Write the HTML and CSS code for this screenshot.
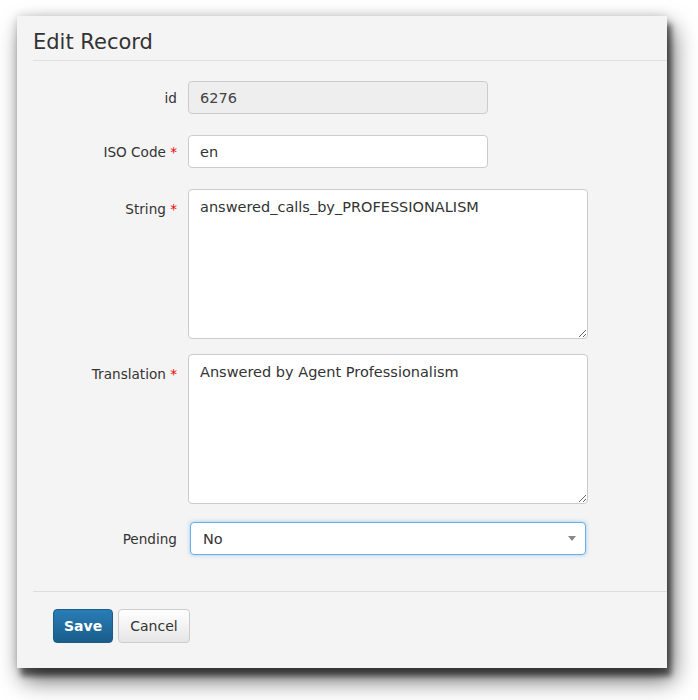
FILE: index.html
```html
<!DOCTYPE html>
<html lang="en">
<head>
  <meta charset="UTF-8">
  <title>Edit Record</title>
  <link rel="stylesheet" href="styles.css">
</head>
<body>

  <div class="dialog">
    <div class="dialog-header">
      <h1>Edit Record</h1>
    </div>

    <form class="record-form">
      <div class="row">
        <label class="label">id</label>
        <input type="text" class="field short" value="6276" disabled>
      </div>

      <div class="row">
        <label class="label">ISO Code <span class="req">*</span></label>
        <input type="text" class="field short" value="en">
      </div>

      <div class="row top">
        <label class="label">String <span class="req">*</span></label>
        <textarea class="field long">answered_calls_by_PROFESSIONALISM</textarea>
      </div>

      <div class="row top">
        <label class="label">Translation <span class="req">*</span></label>
        <textarea class="field long">Answered by Agent Professionalism</textarea>
      </div>

      <div class="row pending">
        <label class="label">Pending</label>
        <div class="select-box">
          <span>No</span>
          <span class="caret"></span>
        </div>
      </div>
    </form>

    <div class="dialog-footer">
      <button type="button" class="btn btn-primary">Save</button>
      <button type="button" class="btn">Cancel</button>
    </div>
  </div>

</body>
</html>
```

FILE: styles.css
```css
html, body {
  margin: 0;
  background: #fff;
}

body {
  width: 698px;
  height: 700px;
  padding: 16px 0 0 17px;
  box-sizing: border-box;
  overflow: hidden;
  font-family: "DejaVu Sans", Verdana, sans-serif;
  color: #333;
}

.dialog {
  width: 650px;
  height: 652px;
  background: #f4f4f4;
  box-shadow: 4px 8px 6px rgba(0, 0, 0, 0.55), 6px 12px 22px rgba(0, 0, 0, 0.6), 0 0 10px rgba(0, 0, 0, 0.15);
  display: flex;
  flex-direction: column;
}

.dialog-header {
  margin-left: 16px;
  border-bottom: 1px solid #e0e0e0;
  height: 44px;
}

.dialog-header h1 {
  margin: 0;
  padding-top: 14px;
  font-size: 21px;
  font-weight: normal;
  line-height: 25px;
  color: #333;
}

.record-form {
  padding-top: 20px;
  flex: 1;
}

.row {
  display: flex;
  align-items: center;
  margin-bottom: 21px;
}

.row.top {
  align-items: flex-start;
  margin-bottom: 15px;
}

.row.top .label {
  padding-top: 12px;
}

.row.pending {
  margin-top: 18px;
}

.label {
  width: 160px;
  text-align: right;
  font-size: 13.6px;
  margin-right: 11px;
  color: #333;
}

.req {
  color: #e00;
}

.field {
  box-sizing: border-box;
  font-family: "DejaVu Sans", Verdana, sans-serif;
  font-size: 14.5px;
  color: #333;
  background: #fff;
  border: 1px solid #ccc;
  border-radius: 4px;
  padding: 6px 11px;
}

.field:disabled {
  background: #eee;
  color: #444;
}

.short {
  width: 300px;
  height: 33px;
}

.long {
  width: 400px;
  height: 150px;
  padding-top: 9px;
  resize: vertical;
}

.select-box {
  box-sizing: border-box;
  width: 396px;
  height: 33px;
  margin-left: 2px;
  padding: 0 9px 0 12px;
  display: flex;
  align-items: center;
  justify-content: space-between;
  background: #fff;
  border: 1px solid #66afe9;
  border-radius: 4px;
  box-shadow: 0 0 4px rgba(102, 175, 233, 0.6);
  font-size: 14.5px;
}

.caret {
  width: 0;
  height: 0;
  border-left: 4px solid transparent;
  border-right: 4px solid transparent;
  border-top: 5px solid #888;
}

.dialog-footer {
  margin-left: 16px;
  border-top: 1px solid #ddd;
  height: 77px;
  padding: 17px 0 0 20px;
  box-sizing: border-box;
}

.btn {
  font-family: "DejaVu Sans", Verdana, sans-serif;
  font-size: 14px;
  height: 34px;
  padding: 0 11px;
  border: 1px solid #ccc;
  border-radius: 4px;
  background: linear-gradient(#fff, #e6e6e6);
  color: #333;
}

.btn-primary {
  padding: 0 10px;
  font-weight: bold;
  color: #fff;
  border-color: #1b5d87;
  background: linear-gradient(#2a7db6, #195d8c);
}
```
